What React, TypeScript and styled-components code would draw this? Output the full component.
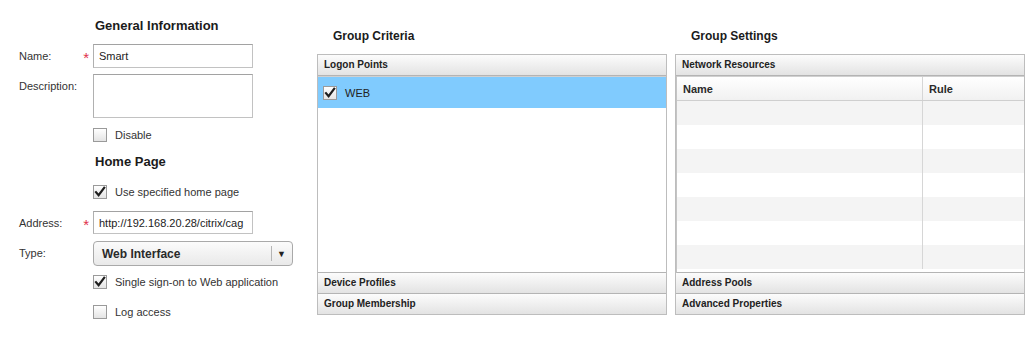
import React from 'react';
import styled, { createGlobalStyle } from 'styled-components';

const GlobalStyle = createGlobalStyle`
    body {
        margin: 0;
        background: #ffffff;
        font-family: "Liberation Sans", Arial, sans-serif;
        color: #2b2b2b;
    }
`;

const CheckMark = () => (
    <svg width="12" height="12" viewBox="0 0 12 12">
        <path d="M2 6.2 L4.6 9.2 L10.2 1.8" fill="none" stroke="#1e1e1e" strokeWidth="2.2" strokeLinecap="square" />
    </svg>
);

const CheckBox = ({ checked }: { checked?: boolean }) => (
    <Box>{checked ? <CheckMark /> : null}</Box>
);

const Field = ({ label, required, children }: { label: string; required?: boolean; children: React.ReactNode }) => (
    <FieldRow>
        <LabelCell>
            <span>{label}</span>
            {required ? <Star>*</Star> : null}
        </LabelCell>
        {children}
    </FieldRow>
);

const resourceRows = [0, 1, 2, 3, 4, 5, 6];

export default function App() {
    return (
        <Page>
            <GlobalStyle />
            <FormColumn>
                <FormHeading top={18}>General Information</FormHeading>
                <Spacer size={10} />
                <Field label="Name:" required>
                    <TextInput height={24}>Smart</TextInput>
                </Field>
                <Spacer size={6} />
                <Field label="Description:">
                    <TextInput height={44} />
                </Field>
                <Spacer size={10} />
                <CheckRow>
                    <CheckBox />
                    <span>Disable</span>
                </CheckRow>
                <Spacer size={12} />
                <FormHeading>Home Page</FormHeading>
                <Spacer size={15} />
                <CheckRow>
                    <CheckBox checked />
                    <span>Use specified home page</span>
                </CheckRow>
                <Spacer size={12} />
                <Field label="Address:" required>
                    <TextInput height={23}>http://192.168.20.28/citrix/cag</TextInput>
                </Field>
                <Spacer size={7} />
                <Field label="Type:">
                    <Select>
                        <span>Web Interface</span>
                        <SelectArrow>▼</SelectArrow>
                    </Select>
                </Field>
                <Spacer size={9} />
                <CheckRow>
                    <CheckBox checked />
                    <span>Single sign-on to Web application</span>
                </CheckRow>
                <Spacer size={16} />
                <CheckRow>
                    <CheckBox />
                    <span>Log access</span>
                </CheckRow>
            </FormColumn>

            <PanelColumn>
                <PanelTitle>Group Criteria</PanelTitle>
                <Panel>
                    <BarHeader>Logon Points</BarHeader>
                    <PanelBody>
                        <SelectedRow>
                            <CheckBox checked />
                            <span>WEB</span>
                        </SelectedRow>
                    </PanelBody>
                    <BarHeader>Device Profiles</BarHeader>
                    <BarHeader last>Group Membership</BarHeader>
                </Panel>
            </PanelColumn>

            <PanelColumn>
                <PanelTitle>Group Settings</PanelTitle>
                <Panel>
                    <BarHeader>Network Resources</BarHeader>
                    <ResourceTable>
                        <TableHead>
                            <NameCell>Name</NameCell>
                            <RuleCell>Rule</RuleCell>
                        </TableHead>
                        {resourceRows.map(i => (
                            <TableRow key={i} striped={i % 2 === 0}>
                                <NameCell />
                                <RuleCell />
                            </TableRow>
                        ))}
                    </ResourceTable>
                    <BarHeader>Address Pools</BarHeader>
                    <BarHeader last>Advanced Properties</BarHeader>
                </Panel>
            </PanelColumn>
        </Page>
    );
}

const Page = styled.div`
    display: flex;
    flex-direction: row;
    gap: 8px;
    width: 1027px;
    height: 343px;
`;

const FormColumn = styled.div`
    display: flex;
    flex-direction: column;
    flex-shrink: 0;
    width: 290px;
    padding-left: 19px;
    font-size: 11px;
`;

const Spacer = styled.div<{ size: number }>`
    height: ${props => props.size}px;
    flex-shrink: 0;
`;

const FormHeading = styled.div<{ top?: number }>`
    margin-top: ${props => props.top || 0}px;
    padding-left: 76px;
    height: 16px;
    line-height: 16px;
    font-size: 13px;
    font-weight: bold;
    color: #1b1b1b;
`;

const FieldRow = styled.div`
    display: grid;
    grid-template-columns: 74px auto;
    align-items: start;
`;

const LabelCell = styled.div`
    display: flex;
    justify-content: space-between;
    padding-top: 6px;
    padding-right: 4px;
    color: #333;
`;

const Star = styled.span`
    color: #e0304a;
    font-size: 15px;
    line-height: 13px;
    margin-top: 1px;
`;

const TextInput = styled.div<{ height: number }>`
    box-sizing: border-box;
    width: 160px;
    height: ${props => props.height}px;
    border: 1px solid #c2c2c2;
    border-top-color: #a2a2a2;
    border-left-color: #b0b0b0;
    padding: 5px 5px 0 5px;
    font-size: 11px;
    color: #222;
    background: #fff;
    white-space: nowrap;
    overflow: hidden;
`;

const Select = styled.div`
    box-sizing: border-box;
    width: 200px;
    height: 25px;
    display: flex;
    align-items: center;
    justify-content: space-between;
    border: 1px solid #a9a9a9;
    border-radius: 4px;
    background: linear-gradient(#fbfbfb, #e9e9e9);
    padding-left: 8px;
    font-size: 12px;
    font-weight: bold;
    color: #2a2a2a;
`;

const SelectArrow = styled.span`
    display: flex;
    align-items: center;
    justify-content: center;
    width: 19px;
    height: 15px;
    border-left: 1px solid #b5b5b5;
    font-size: 9px;
    color: #222;
    margin-right: 1px;
`;

const CheckRow = styled.div`
    display: flex;
    align-items: center;
    gap: 8px;
    padding-left: 74px;
    height: 14px;
    color: #333;
`;

const Box = styled.div`
    box-sizing: border-box;
    width: 14px;
    height: 14px;
    flex-shrink: 0;
    border: 1px solid #9a9a9a;
    background: linear-gradient(#ffffff, #e4e4e4);
    display: flex;
    align-items: center;
    justify-content: center;
`;

const PanelColumn = styled.div`
    display: flex;
    flex-direction: column;
    flex-shrink: 0;
    width: 350px;
`;

const PanelTitle = styled.div`
    margin-top: 28px;
    padding-left: 16px;
    height: 16px;
    line-height: 16px;
    font-size: 12px;
    font-weight: bold;
    color: #1b1b1b;
    margin-bottom: 10px;
`;

const Panel = styled.div`
    box-sizing: border-box;
    display: flex;
    flex-direction: column;
    height: 261px;
    border: 1px solid #bdbdbd;
    background: #fff;
`;

const BarHeader = styled.div<{ last?: boolean }>`
    flex-shrink: 0;
    height: 20px;
    line-height: 20px;
    padding-left: 6px;
    font-size: 10px;
    font-weight: bold;
    color: #222;
    background: linear-gradient(#fcfcfc, #e3e3e3);
    border-bottom: ${props => props.last ? 'none' : '1px solid #b4b4b4'};
`;

const PanelBody = styled.div`
    flex: 1;
    border-top: 1px solid #d0d0d0;
    border-bottom: 1px solid #b4b4b4;
    background: #fff;
`;

const SelectedRow = styled.div`
    display: flex;
    align-items: center;
    gap: 8px;
    height: 31px;
    padding-left: 5px;
    background: #80cbfe;
    font-size: 11px;
    color: #222;
`;

const ResourceTable = styled.div`
    flex: 1;
    display: flex;
    flex-direction: column;
    border-left: 1px solid #c4c4c4;
    border-bottom: 1px solid #b4b4b4;
    overflow: hidden;
`;

const TableHead = styled.div`
    display: grid;
    grid-template-columns: 246px 1fr;
    height: 23px;
    flex-shrink: 0;
    background: linear-gradient(#ffffff, #f1f1f1);
    border-top: 1px solid #d0d0d0;
    border-bottom: 1px solid #cfcfcf;
    font-size: 11px;
    font-weight: bold;
    color: #2a2a2a;
`;

const TableRow = styled.div<{ striped: boolean }>`
    display: grid;
    grid-template-columns: 246px 1fr;
    height: 24px;
    flex-shrink: 0;
    background: ${props => props.striped ? '#f4f4f4' : '#ffffff'};
`;

const NameCell = styled.div`
    display: flex;
    align-items: center;
    padding-left: 6px;
    border-right: 1px solid #d6d6d6;
`;

const RuleCell = styled.div`
    display: flex;
    align-items: center;
    padding-left: 6px;
`;
